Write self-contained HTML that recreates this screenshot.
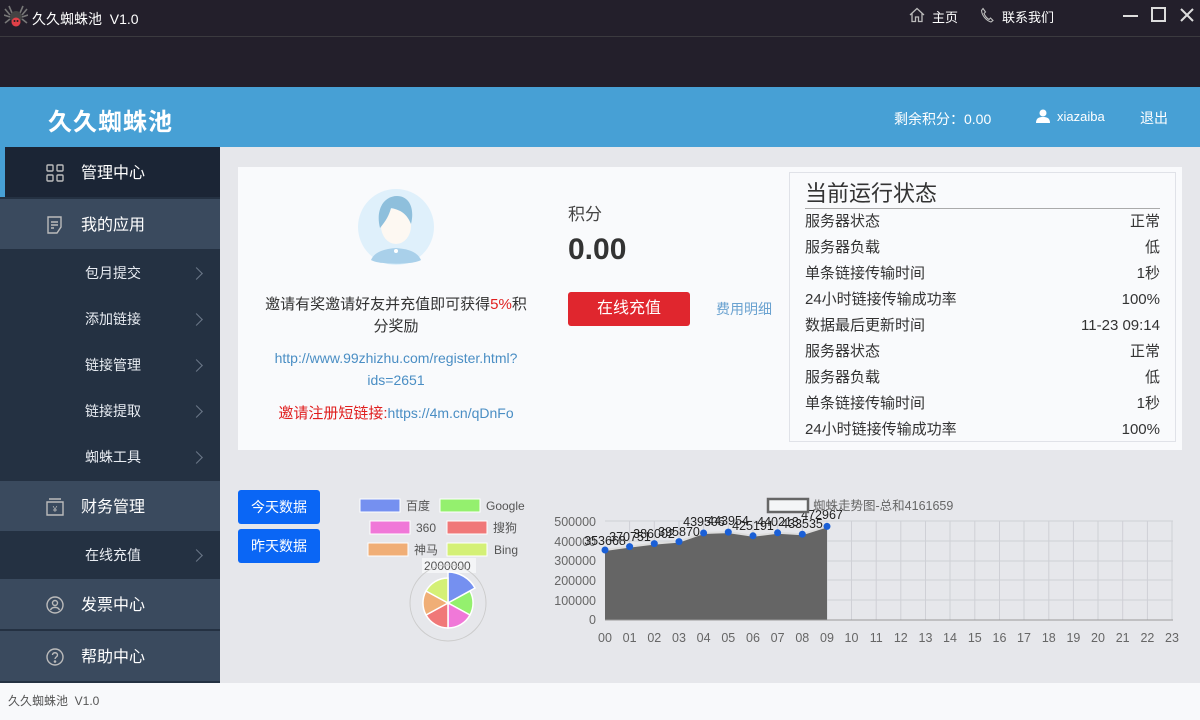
<!DOCTYPE html>
<html><head><meta charset="utf-8"><style>
*{margin:0;padding:0;box-sizing:border-box}
body{width:1200px;height:720px;overflow:hidden;background:#e6e7eb;font-family:"Liberation Sans","Noto Sans CJK SC",sans-serif;position:relative}
.abs{position:absolute}
.top{left:0;top:0;width:1200px;height:87px;background:#231f2b}
.top .line{position:absolute;left:0;top:36px;width:1200px;height:1px;background:#3b3a3f}
.hdr{left:0;top:87px;width:1200px;height:60px;background:#47a0d5;color:#fff}
.side{left:0;top:147px;width:220px;height:536px;background:#243142}
.m{position:absolute;left:0;width:220px;height:50px;color:#fff;font-size:16px;line-height:54px;padding-left:81px}
.m svg{position:absolute;left:46px;top:17px}
.s{position:absolute;left:0;width:220px;height:46px;color:#e8ecf2;font-size:14px;line-height:48px;padding-left:85px}
.s:after{content:"";position:absolute;left:192px;top:20px;width:8px;height:8px;border-right:1px solid #6c7889;border-top:1px solid #6c7889;transform:rotate(45deg)}
.card{left:238px;top:167px;width:944px;height:283px;background:#f9fafc}
.st{position:absolute;left:15px;width:355px;font-size:15px;color:#333;height:26px;line-height:26px}
.st b{float:right;font-weight:normal}
.btn{position:absolute;left:238px;width:82px;height:34px;background:#0a66f5;color:#fff;border-radius:3px;font-size:14px;text-align:center;line-height:34px}
.foot{left:0;top:683px;width:1200px;height:37px;background:#f8f9fb;font-size:12px;color:#555;line-height:37px;padding-left:8px}
</style></head><body>
<div class="abs top"><div class="line"></div>
<svg class="abs" style="left:4px;top:5px" width="24" height="24" viewBox="0 0 24 24"><g stroke="#777" stroke-width="1.6" fill="none"><path d="M6 10L1 4M6 12L0 10M6 14L1 18M18 10L23 4M18 12L24 10M18 14L23 18M8 8L5 1M16 8L19 1"/></g><ellipse cx="12" cy="12" rx="6" ry="6" fill="#444"/><circle cx="12" cy="17" r="4.5" fill="#e04048"/><circle cx="10.5" cy="16" r="1" fill="#222"/><circle cx="13.5" cy="16" r="1" fill="#222"/></svg>
<div class="abs" style="left:32px;top:9px;color:#fff;font-size:14px">久久蜘蛛池&nbsp; V1.0</div>
<svg class="abs" style="left:909px;top:7px" width="16" height="16" viewBox="0 0 16 16"><path d="M1 8L8 1.5L15 8M3 6.5V14.5H6.5V10H9.5V14.5H13V6.5" stroke="#bbb" stroke-width="1.3" fill="none"/></svg>
<div class="abs" style="left:932px;top:7px;color:#fff;font-size:13px">主页</div>
<svg class="abs" style="left:980px;top:7px" width="14" height="16" viewBox="0 0 14 16"><path d="M3 1.5L5.5 5L4 6.5C5 9 6.5 11 9 12.5L10.5 11L13 13.5L11 15C6 13.5 2 8.5 1.5 3.5Z" stroke="#bbb" stroke-width="1.1" fill="none"/></svg>
<div class="abs" style="left:1002px;top:7px;color:#fff;font-size:13px">联系我们</div>
<div class="abs" style="left:1123px;top:15px;width:15px;height:2px;background:#ddd"></div>
<div class="abs" style="left:1151px;top:7px;width:15px;height:15px;border:2px solid #ddd"></div>
<svg class="abs" style="left:1180px;top:8px" width="14" height="14"><path d="M1 1L13 13M13 1L1 13" stroke="#ddd" stroke-width="2"/></svg>
</div>
<div class="abs hdr">
<div class="abs" style="left:48px;top:15px;font-size:24px;font-weight:bold;letter-spacing:1px">久久蜘蛛池</div>
<div class="abs" style="left:894px;top:22px;font-size:14px">剩余积分：0.00</div>
<svg class="abs" style="left:1036px;top:22px" width="14" height="14" viewBox="0 0 14 14"><circle cx="7" cy="4" r="3.5" fill="#fff"/><path d="M0 14C0 9 3 8 7 8S14 9 14 14Z" fill="#fff"/></svg>
<div class="abs" style="left:1057px;top:22px;font-size:13px">xiazaiba</div>
<div class="abs" style="left:1140px;top:21px;font-size:14px">退出</div>
</div>
<div class="abs side">
<div class="m" style="top:0;background:#1b2535"><div class="abs" style="left:0;top:0;width:5px;height:50px;background:#47a0d5"></div><svg width="18" height="18" viewBox="0 0 18 18" fill="none" stroke="#bbb" stroke-width="1.4"><rect x="1" y="1" width="6" height="6" rx="1"/><rect x="11" y="1" width="6" height="6" rx="1"/><rect x="1" y="11" width="6" height="6" rx="1"/><rect x="11" y="11" width="6" height="6" rx="1"/></svg>管理中心</div>
<div class="m" style="top:52px;background:#3a4a5e"><svg width="18" height="18" viewBox="0 0 18 18" fill="none" stroke="#bbb" stroke-width="1.4"><path d="M2 1H15V11L11 17H2Z M5 6H12M5 9H12M5 12H8"/></svg>我的应用</div>
<div class="s" style="top:102px">包月提交</div>
<div class="s" style="top:148px">添加链接</div>
<div class="s" style="top:194px">链接管理</div>
<div class="s" style="top:240px">链接提取</div>
<div class="s" style="top:286px">蜘蛛工具</div>
<div class="m" style="top:334px;background:#3a4a5e"><svg width="18" height="18" viewBox="0 0 18 18" fill="none" stroke="#bbb" stroke-width="1.4"><path d="M1 4H17V17H1Z M3 1H15"/><text x="9" y="14" font-size="8" fill="#bbb" stroke="none" text-anchor="middle">¥</text></svg>财务管理</div>
<div class="s" style="top:384px">在线充值</div>
<div class="m" style="top:432px;background:#3a4a5e"><svg width="18" height="18" viewBox="0 0 18 18" fill="none" stroke="#bbb" stroke-width="1.4"><circle cx="9" cy="9" r="8"/><circle cx="9" cy="7" r="2.5"/><path d="M4.5 14C6 10.5 12 10.5 13.5 14"/></svg>发票中心</div>
<div class="m" style="top:484px;background:#3a4a5e"><svg width="18" height="18" viewBox="0 0 18 18" fill="none" stroke="#bbb" stroke-width="1.4"><circle cx="9" cy="9" r="8"/><path d="M6.5 7C6.5 4 11.5 4 11.5 7C11.5 9 9 9 9 11"/><circle cx="9" cy="13.5" r=".6" fill="#bbb"/></svg>帮助中心</div>
</div>
<div class="abs card">
<svg class="abs" style="left:119px;top:21px" width="78" height="78" viewBox="0 0 78 78"><circle cx="39" cy="39" r="38" fill="#dff0fb"/><path d="M14 72C18 63 28 61 39 60C50 61 60 63 64 72C56 77 22 77 14 72Z" fill="#a9d0ea"/><ellipse cx="39" cy="38" rx="15" ry="18" fill="#fdf8f2"/><path d="M23 40C18 20 28 8 40 8C52 8 58 20 54 36C50 26 44 22 34 20C32 28 28 34 23 40Z" fill="#8ebfdc"/><circle cx="39" cy="63" r="2" fill="#fff"/></svg>
<div class="abs" style="left:20px;top:127px;width:276px;text-align:center;font-size:15px;color:#333;line-height:22px">邀请有奖邀请好友并充值即可获得<span style="color:#e02020">5%</span>积分奖励</div>
<div class="abs" style="left:15px;top:180px;width:286px;text-align:center;font-size:14px;color:#4a8ec4;line-height:22px">http://www.99zhizhu.com/register.html?<br>ids=2651</div>
<div class="abs" style="left:15px;top:235px;width:286px;text-align:center;font-size:15px;color:#e02020">邀请注册短链接:<span style="color:#4a8ec4;font-size:14px">https://4m.cn/qDnFo</span></div>
<div class="abs" style="left:330px;top:33px;font-size:17px;color:#444">积分</div>
<div class="abs" style="left:330px;top:66px;font-size:30px;font-weight:bold;color:#333">0.00</div>
<div class="abs" style="left:330px;top:125px;width:122px;height:34px;background:#e0262e;border-radius:3px;color:#fff;font-size:16px;text-align:center;line-height:34px">在线充值</div>
<div class="abs" style="left:478px;top:132px;font-size:14px;color:#6aa2d0">费用明细</div>
<div class="abs" style="left:551px;top:5px;width:387px;height:270px;border:1px solid #e0e2e8">
<div class="abs" style="left:15px;top:3px;font-size:22px;color:#333">当前运行状态</div>
<div class="abs" style="left:15px;top:35px;width:355px;height:1px;background:#aaa"></div>
<div class="st" style="top:36px">服务器状态<b>正常</b></div>
<div class="st" style="top:62px">服务器负载<b>低</b></div>
<div class="st" style="top:88px">单条链接传输时间<b>1秒</b></div>
<div class="st" style="top:114px">24小时链接传输成功率<b>100%</b></div>
<div class="st" style="top:140px">数据最后更新时间<b>11-23 09:14</b></div>
<div class="st" style="top:166px">服务器状态<b>正常</b></div>
<div class="st" style="top:192px">服务器负载<b>低</b></div>
<div class="st" style="top:218px">单条链接传输时间<b>1秒</b></div>
<div class="st" style="top:244px">24小时链接传输成功率<b>100%</b></div>
</div>
</div>
<div class="btn" style="top:490px">今天数据</div>
<div class="btn" style="top:529px">昨天数据</div>
<svg class="abs" style="left:340px;top:490px" width="200" height="160" font-family="Liberation Sans,Noto Sans CJK SC,sans-serif" font-size="12" fill="#555">
<rect x="20" y="9" width="40" height="13" fill="#7590f0" stroke="#fff"/><text x="66" y="20">百度</text>
<rect x="100" y="9" width="40" height="13" fill="#94f06e" stroke="#fff"/><text x="146" y="20">Google</text>
<rect x="30" y="31" width="40" height="13" fill="#f078d8" stroke="#fff"/><text x="76" y="42">360</text>
<rect x="107" y="31" width="40" height="13" fill="#f07878" stroke="#fff"/><text x="153" y="42">搜狗</text>
<rect x="28" y="53" width="40" height="13" fill="#f0ae76" stroke="#fff"/><text x="74" y="64">神马</text>
<rect x="107" y="53" width="40" height="13" fill="#d4f076" stroke="#fff"/><text x="154" y="64">Bing</text>
<rect x="82" y="68" width="54" height="15" fill="#f4f5f7"/><text x="84" y="80">2000000</text>
<circle cx="108" cy="113" r="38" fill="none" stroke="#ccc"/>
<g stroke="#fff" stroke-width="1.5">
<path d="M108 113V82A31 31 0 0 1 135 98Z" fill="#7590f0"/>
<path d="M108 113L130 101A25 25 0 0 1 130 125Z" fill="#94f06e"/>
<path d="M108 113L130 125A25 25 0 0 1 108 138Z" fill="#f078d8"/>
<path d="M108 113V138A25 25 0 0 1 86 125Z" fill="#f07878"/>
<path d="M108 113L86 125A25 25 0 0 1 86 101Z" fill="#f0ae76"/>
<path d="M108 113L86 101A25 25 0 0 1 108 88Z" fill="#d4f076"/>
</g></svg>
<svg class="abs" style="left:550px;top:490px" width="650" height="160" font-family="Liberation Sans,Noto Sans CJK SC,sans-serif" font-size="12.5">
<g stroke="#cfd0d6" stroke-width="1">
<path d="M55 31H623M55 51H623M55 71H623M55 90H623M55 110H623"/>
<path d="M79.6 31V130M104.3 31V130M129 31V130M153.6 31V130M178.3 31V130M203 31V130M227.6 31V130M252.3 31V130M277 31V130M301.5 31V130M326.2 31V130M350.8 31V130M375.5 31V130M400 31V130M424.8 31V130M449.5 31V130M474 31V130M498.8 31V130M523.4 31V130M548 31V130M572.7 31V130M597.4 31V130M622 31V130"/>
</g>
<path d="M55 60L79.6 56.6L104.3 53.6L129 51.6L153.6 43L178.3 42.1L203 45.8L227.6 42.8L252.3 44.2L277 36.4V130H55Z" fill="#656565"/>
<path d="M55 60L79.6 56.6L104.3 53.6L129 51.6L153.6 43L178.3 42.1L203 45.8L227.6 42.8L252.3 44.2L277 36.4" stroke="#ddd" stroke-width="2" fill="none"/>
<path d="M55 130H623" stroke="#999"/>
<g fill="#1a5fd6"><circle cx="55" cy="60" r="3.5"/><circle cx="79.6" cy="56.6" r="3.5"/><circle cx="104.3" cy="53.6" r="3.5"/><circle cx="129" cy="51.6" r="3.5"/><circle cx="153.6" cy="43" r="3.5"/><circle cx="178.3" cy="42.1" r="3.5"/><circle cx="203" cy="45.8" r="3.5"/><circle cx="227.6" cy="42.8" r="3.5"/><circle cx="252.3" cy="44.2" r="3.5"/><circle cx="277" cy="36.4" r="3.5"/></g>
<g fill="#666" text-anchor="end"><text x="46" y="36">500000</text><text x="46" y="56">400000</text><text x="46" y="75">300000</text><text x="46" y="95">200000</text><text x="46" y="115">100000</text><text x="46" y="134">0</text></g>
<g fill="#222" text-anchor="middle"><text x="55" y="55">353668</text><text x="80" y="51">370751</text><text x="104" y="48">386002</text><text x="129" y="46">395870</text><text x="154" y="36">439506</text><text x="178" y="35">443954</text><text x="203" y="40">425191</text><text x="228" y="36">440213</text><text x="252" y="38">433535</text><text x="272" y="29">472967</text></g>
<g fill="#666" text-anchor="middle"><text x="55" y="152">00</text><text x="79.6" y="152">01</text><text x="104.3" y="152">02</text><text x="129" y="152">03</text><text x="153.6" y="152">04</text><text x="178.3" y="152">05</text><text x="203" y="152">06</text><text x="227.6" y="152">07</text><text x="252.3" y="152">08</text><text x="277" y="152">09</text><text x="301.5" y="152">10</text><text x="326.2" y="152">11</text><text x="350.8" y="152">12</text><text x="375.5" y="152">13</text><text x="400" y="152">14</text><text x="424.8" y="152">15</text><text x="449.5" y="152">16</text><text x="474" y="152">17</text><text x="498.8" y="152">18</text><text x="523.4" y="152">19</text><text x="548" y="152">20</text><text x="572.7" y="152">21</text><text x="597.4" y="152">22</text><text x="622" y="152">23</text></g>
<rect x="218" y="9" width="40" height="13" fill="#f4f5f7" stroke="#666" stroke-width="2.5"/>
<text x="263" y="20" fill="#666">蜘蛛走势图-总和4161659</text>
</svg>
<div class="abs foot">久久蜘蛛池&nbsp; V1.0</div>
</body></html>
